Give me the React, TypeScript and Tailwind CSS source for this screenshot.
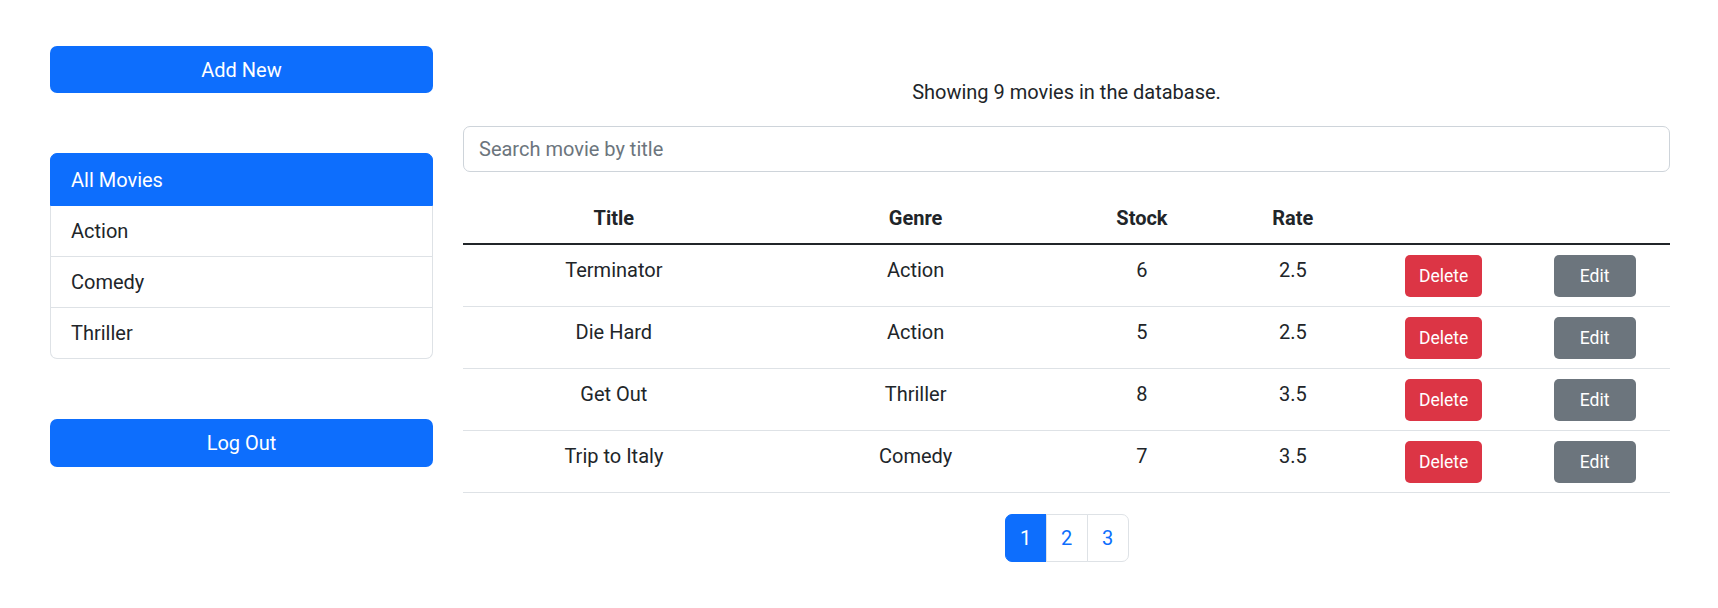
import { useState } from "react";

type Movie = {
  title: string;
  genre: string;
  stock: number;
  rate: number;
};

const movies: Movie[] = [
  { title: "Terminator", genre: "Action", stock: 6, rate: 2.5 },
  { title: "Die Hard", genre: "Action", stock: 5, rate: 2.5 },
  { title: "Get Out", genre: "Thriller", stock: 8, rate: 3.5 },
  { title: "Trip to Italy", genre: "Comedy", stock: 7, rate: 3.5 },
];

const genres = ["All Movies", "Action", "Comedy", "Thriller"];

export default function App() {
  const [selected, setSelected] = useState("All Movies");
  const [page, setPage] = useState(1);
  const [query, setQuery] = useState("");

  return (
    <div
      className="min-h-[608px] w-full bg-white text-[#212529] text-[20px] leading-[30px]"
      style={{ fontFamily: '"Segoe UI", Roboto, "Liberation Sans", sans-serif' }}
    >
      <div className="flex gap-[30px] pl-[50px] pr-[48px] pt-[46px]">
        {/* sidebar */}
        <div className="w-[383px] shrink-0">
          <button className="w-full h-[47px] rounded-[7px] bg-[#0d6efd] text-white text-[20px]">
            Add New
          </button>

          <ul className="mt-[60px]">
            {genres.map((g, i) => {
              const active = g === selected;
              const first = i === 0;
              const last = i === genres.length - 1;
              return (
                <li
                  key={g}
                  onClick={() => setSelected(g)}
                  className={
                    "flex items-center px-[20px] cursor-pointer " +
                    (first ? "h-[53px] border rounded-t-[7px] " : "h-[51px] border-x border-b ") +
                    (last ? "rounded-b-[7px] " : "") +
                    (active ? "bg-[#0d6efd] border-[#0d6efd] text-white" : "bg-white border-[#dee2e6]")
                  }
                >
                  {g}
                </li>
              );
            })}
          </ul>

          <button className="mt-[60px] w-full h-[48px] rounded-[7px] bg-[#0d6efd] text-white text-[20px]">
            Log Out
          </button>
        </div>

        {/* main */}
        <div className="flex-1 pt-[31px]">
          <p className="text-center">Showing 9 movies in the database.</p>

          <input
            value={query}
            onChange={(e) => setQuery(e.target.value)}
            placeholder="Search movie by title"
            className="mt-[19px] w-full h-[46px] rounded-[7px] border border-[#ced4da] px-[15px] text-[20px] placeholder:text-[#6c757d] outline-none"
          />

          <div className="mt-[21px]">
            <div className="grid grid-cols-[2fr_2fr_1fr_1fr_1fr_1fr] border-b-2 border-[#212529] font-bold">
              <div className="py-[10px] text-center">Title</div>
              <div className="py-[10px] text-center">Genre</div>
              <div className="py-[10px] text-center">Stock</div>
              <div className="py-[10px] text-center">Rate</div>
              <div />
              <div />
            </div>
            {movies.map((m) => (
              <div
                key={m.title}
                className="grid grid-cols-[2fr_2fr_1fr_1fr_1fr_1fr] items-start border-b border-[#dee2e6] pt-[10px] pb-[9px]"
              >
                <div className="text-center">{m.title}</div>
                <div className="text-center">{m.genre}</div>
                <div className="text-center">{m.stock}</div>
                <div className="text-center">{m.rate}</div>
                <div className="flex justify-center">
                  <button className="w-[77px] h-[42px] rounded-[5px] bg-[#dc3545] text-white text-[17.5px]">
                    Delete
                  </button>
                </div>
                <div className="flex justify-center">
                  <button className="w-[82px] h-[42px] rounded-[5px] bg-[#6c757d] text-white text-[17.5px]">
                    Edit
                  </button>
                </div>
              </div>
            ))}
          </div>

          <div className="mt-[21px] flex justify-center">
            {[1, 2, 3].map((n, i) => (
              <button
                key={n}
                onClick={() => setPage(n)}
                className={
                  "w-[42px] h-[48px] border text-[20px] " +
                  (i === 0 ? "rounded-l-[7px] " : "-ml-px ") +
                  (i === 2 ? "rounded-r-[7px] " : "") +
                  (page === n
                    ? "bg-[#0d6efd] border-[#0d6efd] text-white"
                    : "bg-white border-[#dee2e6] text-[#0d6efd]")
                }
              >
                {n}
              </button>
            ))}
          </div>
        </div>
      </div>
    </div>
  );
}
